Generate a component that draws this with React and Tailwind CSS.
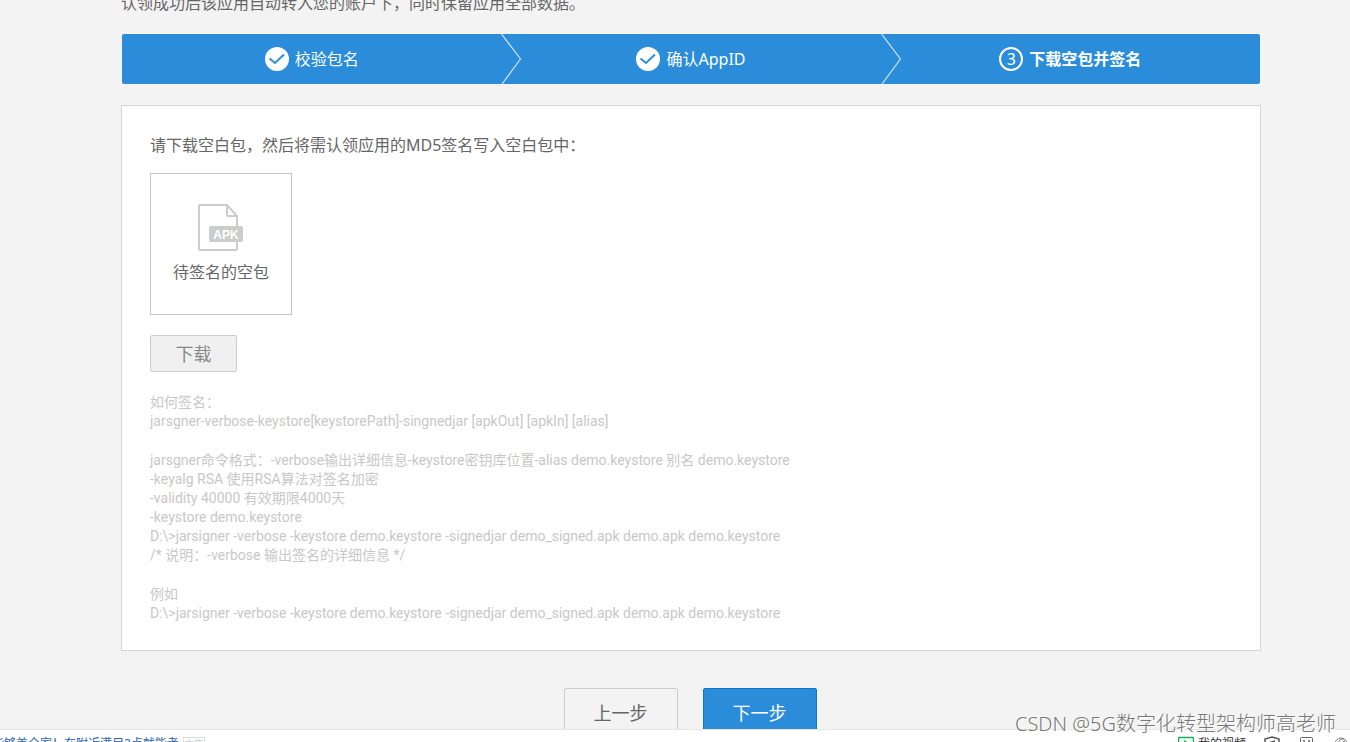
const steps = [
	{ label: "校验包名", done: true },
	{ label: "确认AppID", done: true },
	{ label: "下载空包并签名", done: false },
];

const notes = [
	[
		"如何签名：",
		"jarsgner-verbose-keystore[keystorePath]-singnedjar [apkOut] [apkIn] [alias]",
	],
	[
		"jarsgner命令格式：-verbose输出详细信息-keystore密钥库位置-alias demo.keystore 别名 demo.keystore",
		"-keyalg RSA 使用RSA算法对签名加密",
		"-validity 40000 有效期限4000天",
		"-keystore demo.keystore",
		"D:\\>jarsigner -verbose -keystore demo.keystore -signedjar demo_signed.apk demo.apk demo.keystore",
		"/* 说明：-verbose 输出签名的详细信息 */",
	],
	[
		"例如",
		"D:\\>jarsigner -verbose -keystore demo.keystore -signedjar demo_signed.apk demo.apk demo.keystore",
	],
];

const CheckBadge = () => (
	<svg className="size-6" viewBox="0 0 24 24" fill="none" aria-hidden="true">
		<circle cx="12" cy="12" r="12" fill="#fff" />
		<path d="M4.500 11.500l5.500 4.500L19 7.500" stroke="#2b8dd9" strokeWidth="2" />
	</svg>
);

const Chevron = () => (
	<svg className="absolute left-0 top-0 h-full w-5" viewBox="0 0 20 50" fill="none" preserveAspectRatio="none" aria-hidden="true">
		<path d="M0.5 0L19.5 25L1 50" stroke="#d3e7f7" strokeWidth="1.2" />
	</svg>
);

const ApkIcon = () => (
	<svg className="h-12 w-12" viewBox="0 0 48 48" fill="none" aria-hidden="true">
		<path d="M40 23V13L30 2H3a1 1 0 0 0-1 1v43a1 1 0 0 0 1 1h36a1 1 0 0 0 1-1v-7" stroke="#ccc" strokeWidth="2" />
		<path d="M30 2v10a1 1 0 0 0 1 1h9" stroke="#ccc" strokeWidth="2" />
		<rect x="12" y="23" width="34" height="16" rx="2" fill="#ccc" />
		<text x="29" y="36" textAnchor="middle" fill="#fff" fontSize="12" fontWeight="700" fontFamily="Liberation Sans, Arial, sans-serif">APK</text>
	</svg>
);

const StepBar = () => (
	<ol className="mx-px grid h-[50px] grid-cols-3 overflow-hidden rounded-xs bg-[#2b8dd9] text-white">
		{steps.map((step, i) => (
			<li key={step.label} className="relative flex items-center justify-center gap-1.5">
				{i > 0 && <Chevron />}
				{step.done ? (
					<CheckBadge />
				) : (
					<span className="flex size-6 items-center justify-center rounded-full border-2 border-white">{i + 1}</span>
				)}
				<span className={step.done ? "" : "font-bold"}>{step.label}</span>
			</li>
		))}
	</ol>
);

const StatusBar = () => (
	<footer className="flex h-[13px] shrink-0 items-start justify-between overflow-hidden border-t border-[#e6e6e6] bg-white text-xs leading-4">
		<div className="-ml-2 flex items-start gap-1 pt-1.5">
			<a href="#news" className="whitespace-nowrap text-[#2a62b0]">能够美全家！在附近满足2点就能考</a>
			<span className="mt-px border border-[#ddd] text-[10px] leading-3 text-[#ccc]">广告</span>
		</div>
		<div className="flex items-start gap-[18px] pr-0.5 pt-1.5 text-[#555]">
			<a href="#videos" className="flex items-start gap-1 text-[#333]">
				<svg className="size-4" viewBox="0 0 16 16" fill="none" aria-hidden="true">
					<rect x="0.500" y="1.500" width="15" height="13" rx="1" stroke="#12b05c" strokeWidth="1.500" />
					<path d="M6 4l5 3-5 3z" fill="#12b05c" />
				</svg>
				我的视频
			</a>
			<svg className="size-4" viewBox="0 0 16 16" fill="none" stroke="#555" strokeWidth="1.5" aria-hidden="true">
				<path d="M8 1l7 2v5c0 4-3 6-7 7-4-1-7-3-7-7V3z" />
				<path d="M4 7l7-2M5 9l6-3" />
			</svg>
			<svg className="size-4" viewBox="0 0 16 16" fill="none" stroke="#666" aria-hidden="true">
				<rect x="2.500" y="1.500" width="12" height="12" rx="1" />
				<path d="M6 4v2M11 4v2" strokeWidth="1.500" />
			</svg>
			<svg className="size-4" viewBox="0 0 16 16" fill="none" stroke="#777" aria-hidden="true">
				<circle cx="9" cy="8" r="6" />
				<path d="M5 9c0-3 3-6 7-6M8 11c0-3 2-5 5-6" />
			</svg>
		</div>
	</footer>
);

export default function App() {
	return (
		<div className="relative flex h-screen flex-col overflow-hidden bg-[#f3f3f3] font-['Noto_Sans','Noto_Sans_CJK_SC',sans-serif] text-base text-[#666]">
			<main className="-mt-[9px] min-h-0 flex-1 overflow-hidden pl-[121px] pr-[89px]">
				<p className="mb-[19px] leading-6">认领成功后该应用自动转入您的账户下，同时保留应用全部数据。</p>
				<StepBar />
				<section className="mt-[21px] border border-[#d5d5d5] bg-white px-7 pb-[27px] pt-[27px]">
					<h2 className="leading-6">请下载空白包，然后将需认领应用的MD5签名写入空白包中：</h2>
					<div className="mt-4 flex size-[142px] flex-col items-center border border-[#c5c5c5] pt-[29px]">
						<ApkIcon />
						<span className="mt-[9px] leading-6">待签名的空包</span>
					</div>
					<button type="button" className="mt-5 block h-[37px] w-[87px] rounded-xs border border-[#ccc] bg-[#f0f0f0] text-lg leading-6 text-[#888]">下载</button>
					<div className="mt-[21px] flex flex-col gap-5 font-['Roboto','Noto_Sans_CJK_SC',sans-serif] text-sm leading-[19px] text-[#c8c8c8]">
						{notes.map((lines, i) => (
							<div key={i}>
								{lines.map((line) => (
									<p key={line}>{line}</p>
								))}
							</div>
						))}
					</div>
				</section>
				<div className="mt-[37px] flex justify-center gap-[25px] pr-0.5 text-lg">
					<button type="button" className="h-[50px] w-[114px] rounded-xs border border-[#ccc]">上一步</button>
					<button type="button" className="h-[50px] w-[114px] rounded-xs border border-[#0b76cb] bg-[#2b8dd9] text-white">下一步</button>
				</div>
			</main>
			<StatusBar />
			<div className="absolute bottom-1 right-3.5 text-xl font-light leading-7 text-[#777] text-shadow-[1px_1px_0_#fff]">CSDN @5G数字化转型架构师高老师</div>
		</div>
	);
}
